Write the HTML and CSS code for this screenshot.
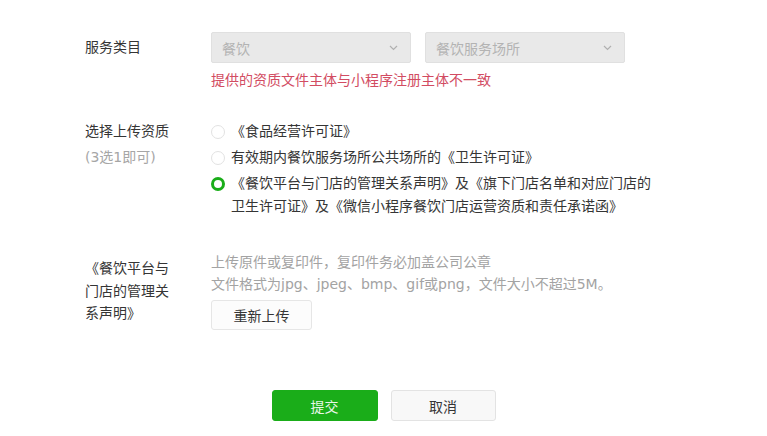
FILE: index.html
```html
<!DOCTYPE html>
<html lang="zh-CN">
<head>
<meta charset="utf-8">
<title>服务类目</title>
<link rel="stylesheet" href="styles.css">
</head>
<body>
<div class="form">
  <div class="row row-category">
    <div class="label label-category">服务类目</div>
    <div class="content">
      <div class="selects">
        <div class="select">
          <span class="select-value">餐饮</span>
          <svg class="chevron" width="9" height="6" viewBox="0 0 9 6"><path d="M1 1 L4.5 4.5 L8 1" fill="none" stroke="#b0b0b0" stroke-width="1.2"/></svg>
        </div>
        <div class="select">
          <span class="select-value">餐饮服务场所</span>
          <svg class="chevron" width="9" height="6" viewBox="0 0 9 6"><path d="M1 1 L4.5 4.5 L8 1" fill="none" stroke="#b0b0b0" stroke-width="1.2"/></svg>
        </div>
      </div>
      <div class="error">提供的资质文件主体与小程序注册主体不一致</div>
    </div>
  </div>

  <div class="row row-qual">
    <div class="label label-qual">选择上传资质<br><span class="sub">(3选1即可)</span></div>
    <div class="content">
      <ul class="radios">
        <li class="radio"><span class="dot"></span><span class="radio-text">《食品经营许可证》</span></li>
        <li class="radio"><span class="dot"></span><span class="radio-text">有效期内餐饮服务场所公共场所的《卫生许可证》</span></li>
        <li class="radio"><span class="dot dot-checked"></span><span class="radio-text">《餐饮平台与门店的管理关系声明》及《旗下门店名单和对应门店的卫生许可证》及《微信小程序餐饮门店运营资质和责任承诺函》</span></li>
      </ul>
    </div>
  </div>

  <div class="row row-upload">
    <div class="label label-upload">《餐饮平台与门店的管理关系声明》</div>
    <div class="content">
      <p class="hint">上传原件或复印件，复印件务必加盖公司公章</p>
      <p class="hint">文件格式为jpg、jpeg、bmp、gif或png，文件大小不超过5M。</p>
      <button class="btn btn-upload">重新上传</button>
    </div>
  </div>

  <div class="actions">
    <button class="btn btn-primary">提交</button>
    <button class="btn btn-default">取消</button>
  </div>
</div>
</body>
</html>
```

FILE: styles.css
```css
* { box-sizing: border-box; }

html, body {
  margin: 0;
  padding: 0;
  background: #ffffff;
}

body {
  font-family: "DejaVu Sans", "Noto Sans CJK SC", sans-serif;
  font-size: 14px;
  color: #353535;
}

.form {
  padding: 32px 0 0 85px;
  width: 767px;
}

.row {
  display: flex;
  align-items: flex-start;
}

.label {
  width: 88px;
  margin-right: 38px;
  color: #353535;
  flex: none;
}

.label-category {
  line-height: 31px;
}

.content {
  display: flex;
  flex-direction: column;
}

.selects {
  display: flex;
  gap: 14px;
}

.select {
  width: 200px;
  height: 31px;
  background: #e9e9e9;
  border: 1px solid #e0e0e0;
  border-radius: 2px;
  display: flex;
  align-items: center;
  justify-content: space-between;
  padding: 0 12px 0 10px;
  color: #b3b3b3;
}

.chevron {
  display: block;
}

.error {
  margin-top: 7px;
  line-height: 20px;
  color: #d24c62;
}

.row-qual {
  margin-top: 30px;
}

.label-qual {
  line-height: 26px;
  margin-top: -2px;
}

.sub {
  color: #a6a6a6;
}

.radios {
  list-style: none;
  margin: 0;
  padding: 0;
  display: flex;
  flex-direction: column;
  gap: 3px;
}

.radio {
  display: flex;
  align-items: flex-start;
  line-height: 23px;
}

.dot {
  flex: none;
  width: 14px;
  height: 14px;
  margin-top: 4.5px;
  margin-right: 6px;
  border: 1px solid #e2e2e2;
  border-radius: 50%;
  background: #fff;
}

.dot-checked {
  border: 3.5px solid #1aad19;
}

.radio-text {
  width: 424px;
  color: #353535;
}

.row-upload {
  margin-top: 33px;
}

.label-upload {
  line-height: 22.5px;
  padding-top: 6px;
}

.hint {
  margin: 0;
  line-height: 22px;
  color: #a3a3a3;
}

.btn {
  font-family: inherit;
  font-size: 14px;
  height: 31px;
  border-radius: 3px;
  cursor: pointer;
  padding: 0;
}

.btn-upload {
  margin-top: 5px;
  width: 101px;
  height: 30px;
  background: #fcfcfc;
  border: 1px solid #e6e6e6;
  color: #353535;
}

.actions {
  display: flex;
  justify-content: center;
  gap: 13px;
  margin-top: 60px;
  margin-left: -85px;
}

.btn-primary {
  width: 106px;
  background: #1aad19;
  border: 1px solid #1aad19;
  color: #e8f6e8;
}

.btn-default {
  width: 105px;
  background: #f8f8f8;
  border: 1px solid #e3e3e3;
  color: #353535;
}
```
